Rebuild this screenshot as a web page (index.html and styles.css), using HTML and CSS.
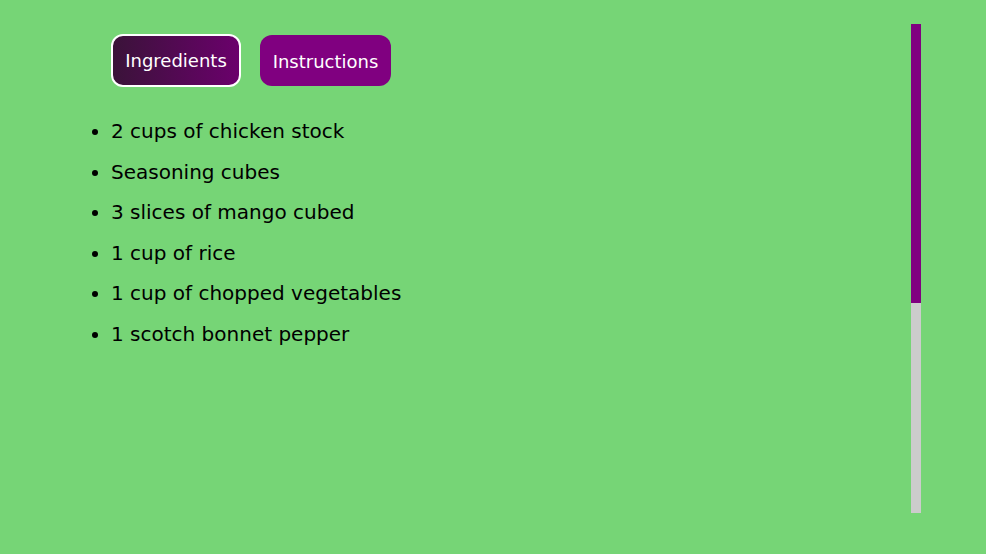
FILE: index.html
```html
<!DOCTYPE html>
<html lang="en">
<head>
<meta charset="utf-8">
<title>Recipe</title>
<link rel="stylesheet" href="styles.css">
</head>
<body>
<div class="page">
  <main class="content">
    <div class="tabs">
      <button class="tab tab-active">Ingredients</button>
      <button class="tab">Instructions</button>
    </div>
    <ul class="list">
      <li>2 cups of chicken stock</li>
      <li>Seasoning cubes</li>
      <li>3 slices of mango cubed</li>
      <li>1 cup of rice</li>
      <li>1 cup of chopped vegetables</li>
      <li>1 scotch bonnet pepper</li>
    </ul>
  </main>
  <div class="scrollbar"><div class="thumb"></div></div>
</div>
</body>
</html>
```
FILE: styles.css
```css
html, body {
  margin: 0;
  padding: 0;
  background: #76d576;
  height: 100%;
}
.page {
  display: flex;
  height: 554px;
  box-sizing: border-box;
  padding-top: 24px;
}
.content {
  flex: 1;
  display: flex;
  flex-direction: column;
}
.tabs {
  display: flex;
  align-items: center;
  gap: 19px;
  margin-top: 10px;
  padding-left: 111px;
}
.tab {
  font-family: "DejaVu Sans", sans-serif;
  font-size: 18px;
  color: #fff;
  background: #800080;
  border: 0;
  border-radius: 12px;
  width: 131px;
  height: 51px;
  padding: 2px 0 0 0;
  cursor: pointer;
}
.tab-active {
  width: 130px;
  height: 53px;
  border: 2px solid #fff;
  padding-top: 0;
  background: linear-gradient(90deg, #3a1339, #6b006c);
}
.list {
  margin: 24px 0 0 0;
  padding-left: 111px;
  font-family: "DejaVu Sans", sans-serif;
  font-size: 20px;
  color: #000;
}
.list li {
  height: 40.6px;
  line-height: 40.6px;
}
.list li::marker {
  font-size: 19px;
}
.scrollbar {
  width: 10px;
  height: 489px;
  background: #cccccc;
  margin-right: 65px;
}
.thumb {
  height: 279px;
  background: #800080;
}
```
